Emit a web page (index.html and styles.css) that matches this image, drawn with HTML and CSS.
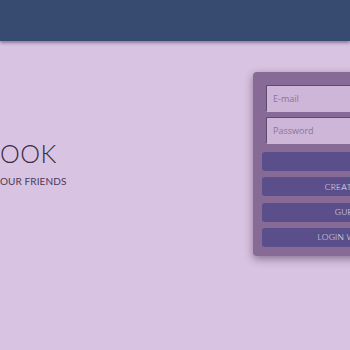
FILE: index.html
```html
<!DOCTYPE html>
<html>
<head>
<meta charset="utf-8">
<link rel="stylesheet" href="styles.css">
</head>
<body>
<header class="topbar"></header>
<main class="main">
  <section class="hero">
    <h1 class="hero-title">OOK</h1>
    <p class="hero-sub">OUR FRIENDS</p>
  </section>
  <section class="card">
    <input class="field" type="text" placeholder="E-mail">
    <input class="field" type="password" placeholder="Password">
    <div class="buttons">
      <button class="btn">LOGIN</button>
      <button class="btn">CREATE ACCOUNT</button>
      <button class="btn">GUEST LOGIN</button>
      <button class="btn">LOGIN WITH GOOGLE</button>
    </div>
  </section>
</main>
</body>
</html>
```
FILE: styles.css
```css
html, body {
  margin: 0;
  padding: 0;
  width: 350px;
  height: 350px;
  overflow: hidden;
}
body {
  background: #d9c3e2;
  font-family: Lato, "Open Sans", sans-serif;
}
.topbar {
  height: 41px;
  background: #374a70;
  box-shadow: 0 2px 3px rgba(60, 30, 70, 0.45);
  position: relative;
  z-index: 2;
}
.main {
  display: grid;
  grid-template-columns: 253px 220px;
  padding-top: 31px;
}
.hero {
  padding-top: 66px;
}
.hero-title {
  margin: 0;
  font-weight: 300;
  font-size: 25px;
  line-height: 30px;
  letter-spacing: 0.5px;
  color: #3a2c45;
}
.hero-sub {
  margin: 6px 0 0;
  font-size: 10px;
  line-height: 14px;
  letter-spacing: 0.1px;
  color: #4a3a55;
}
.card {
  background: #886a97;
  border-radius: 4px;
  box-shadow: 0 3px 8px rgba(40, 20, 50, 0.45);
  padding: 13px 9px 9px;
  display: flex;
  flex-direction: column;
}
.field {
  height: 27px;
  box-sizing: border-box;
  margin: 0 4px 5px;
  padding: 0 6px;
  background: #cdb6d8;
  border: 1px solid #cdb6d8;
  border-top-color: #5e4a6e;
  border-left-color: #5e4a6e;
  font-family: "Open Sans", sans-serif;
  font-size: 9px;
  color: #5a4868;
  outline: none;
}
.field::placeholder {
  color: #8a7598;
}
.buttons {
  margin-top: 3px;
  display: flex;
  flex-direction: column;
  gap: 6.33px;
}
.btn {
  height: 19px;
  border: none;
  border-radius: 3px;
  background: #5a4f8b;
  color: #ece6f4;
  font-family: Lato, sans-serif;
  font-weight: 300;
  font-size: 8.5px;
  letter-spacing: 0.2px;
  padding: 0;
}
```
